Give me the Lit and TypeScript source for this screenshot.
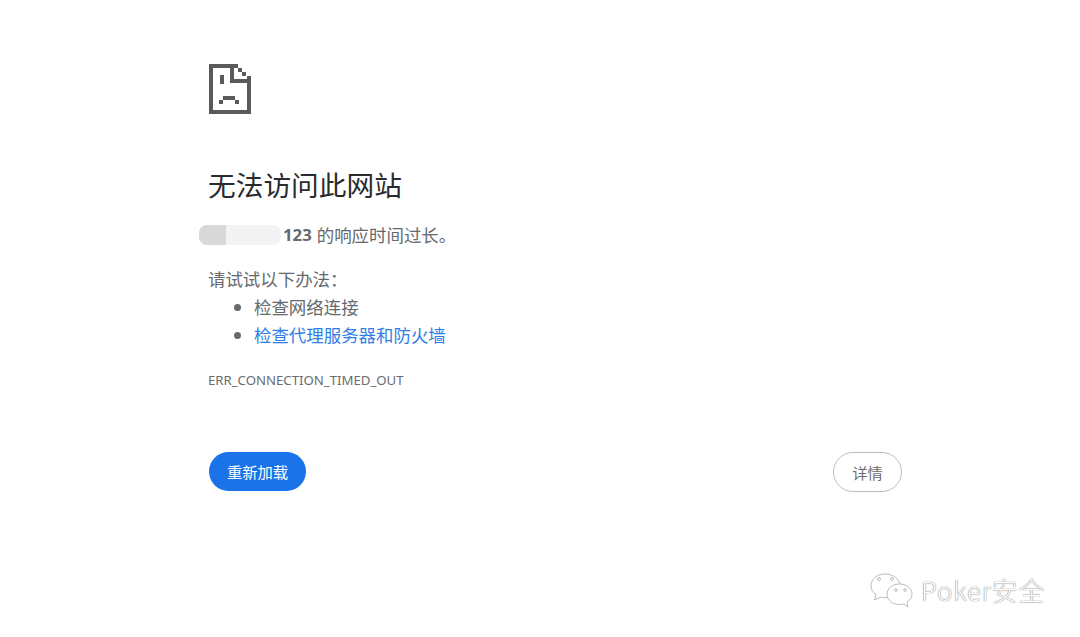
import { LitElement, html, css } from "lit";
import { customElement } from "lit/decorators.js";

@customElement("app-root")
export class AppRoot extends LitElement {
  static styles = css`
    :host {
      display: block;
      position: relative;
      width: 1080px;
      height: 637px;
      overflow: hidden;
      background: #fff;
      font-family: "Noto Sans CJK SC", "Noto Sans", sans-serif;
      color: #66696d;
    }
    .page {
      width: 694px;
      margin-left: 208px;
      padding-top: 64px;
      display: flex;
      flex-direction: column;
    }
    .icon { display: block; width: 43px; height: 50px; }
    h1 {
      margin: 50px 0 0;
      font-size: 27.7px;
      line-height: 40px;
      font-weight: 400;
      color: #2a2b2e;
    }
    p { margin: 0; font-size: 17.45px; line-height: 28px; }
    .host-line {
      margin-top: 17px;
      display: flex;
      align-items: center;
      height: 28px;
      white-space: pre;
    }
    .blur {
      display: flex;
      width: 82px;
      height: 20px;
      margin-left: -9px;
      margin-right: 2px;
      border-radius: 8px;
      overflow: hidden;
      background: #f3f3f3;
    }
    .blur i { display: block; width: 27px; background: #d9d9d9; }
    b {
      font-weight: 700;
      font-family: "Noto Sans", sans-serif;
      font-size: 16.8px;
      margin-right: 1px;
    }
    .try { margin-top: 16px; }
    ul { margin: 0; padding: 0 0 0 46px; font-size: 17.45px; line-height: 28px; }
    a { color: #2f7ee8; text-decoration: none; }
    .code {
      margin-top: 21px;
      font-family: "Noto Sans", sans-serif;
      font-size: 13.2px;
      line-height: 20px;
      color: #6a6d71;
    }
    .actions {
      margin-top: 62px;
      display: flex;
      justify-content: space-between;
      align-items: flex-start;
    }
    button {
      font-family: inherit;
      border-radius: 20px;
      padding: 0;
      cursor: pointer;
    }
    .reload {
      width: 97px;
      height: 39px;
      padding-bottom: 2px;
      background: #1a73e8;
      border: 0;
      color: #fff;
      font-size: 15.3px;
      margin-left: 1px;
    }
    .details {
      width: 69px;
      height: 40px;
      background: #fff;
      border: 1px solid #bdbec0;
      color: #6a6d71;
      font-size: 15.3px;
    }
    .mark {
      position: absolute;
      left: 870px;
      top: 572px;
      display: flex;
      align-items: center;
      gap: 8px;
    }
    .mark svg { display: block; }
    .mark span {
      font-family: "Noto Sans CJK SC", "Noto Sans", sans-serif;
      font-size: 26px;
      font-weight: 300;
      letter-spacing: 0.75px;
      line-height: 36px;
      color: #fff;
      text-shadow: 0 0 1px #808080, 0 0 1px #808080;
    }
  `;

  render() {
    const c = "#5a5a5a";
    return html`
      <div class="page">
        <svg class="icon" viewBox="0 0 43 50" shape-rendering="crispEdges">
          <g fill=${c}>
            <rect x="0.5" y="0" width="29.5" height="4" />
            <rect x="0.5" y="0" width="4" height="49.5" />
            <rect x="0.5" y="45.5" width="42" height="4" />
            <rect x="38.5" y="12" width="4" height="37" />
            <rect x="22" y="0" width="4" height="19" />
            <rect x="22" y="15" width="20" height="4" />
            <rect x="30" y="4" width="4" height="4" />
            <rect x="34" y="8" width="4" height="4" />
            <rect x="11.5" y="11" width="4" height="9" />
            <rect x="15" y="32" width="12" height="4" />
            <rect x="11" y="36" width="4" height="4" />
            <rect x="27" y="36" width="4" height="4" />
          </g>
        </svg>
        <h1>无法访问此网站</h1>
        <p class="host-line"><span class="blur"><i></i></span><b>123</b> 的响应时间过长。</p>
        <p class="try">请试试以下办法：</p>
        <ul>
          <li>检查网络连接</li>
          <li><a href="#">检查代理服务器和防火墙</a></li>
        </ul>
        <div class="code">ERR_CONNECTION_TIMED_OUT</div>
        <div class="actions">
          <button class="reload">重新加载</button>
          <button class="details">详情</button>
        </div>
      </div>
      <div class="mark">
        <svg width="43" height="35" viewBox="0 0 43 35" fill="#fff" stroke="#bcbcbc" stroke-width="1">
          <path d="M15 1C7 1 1 6 1 13C1 16.500 3 19.500 6 21.500L4.500 27L11 24C12.500 24.500 14 24.700 16 24.700C23 24.700 30 19 30 13C30 6 23 1 15 1Z" />
          <path d="M29.500 11C22.500 11 17 15.500 17 21.300C17 27 22.500 31.500 29.500 31.500C31 31.500 32.500 31.300 33.500 30.900L38 34L37 29.300C40 27.300 42 24.500 42 21.300C42 15.500 36.500 11 29.500 11Z" />
          <circle cx="9" cy="6" r="1.500" />
          <circle cx="22" cy="6" r="1.500" />
          <circle cx="26" cy="17" r="1.300" />
          <circle cx="35" cy="17" r="1.300" />
        </svg>
        <span>Poker安全</span>
      </div>
    `;
  }
}
